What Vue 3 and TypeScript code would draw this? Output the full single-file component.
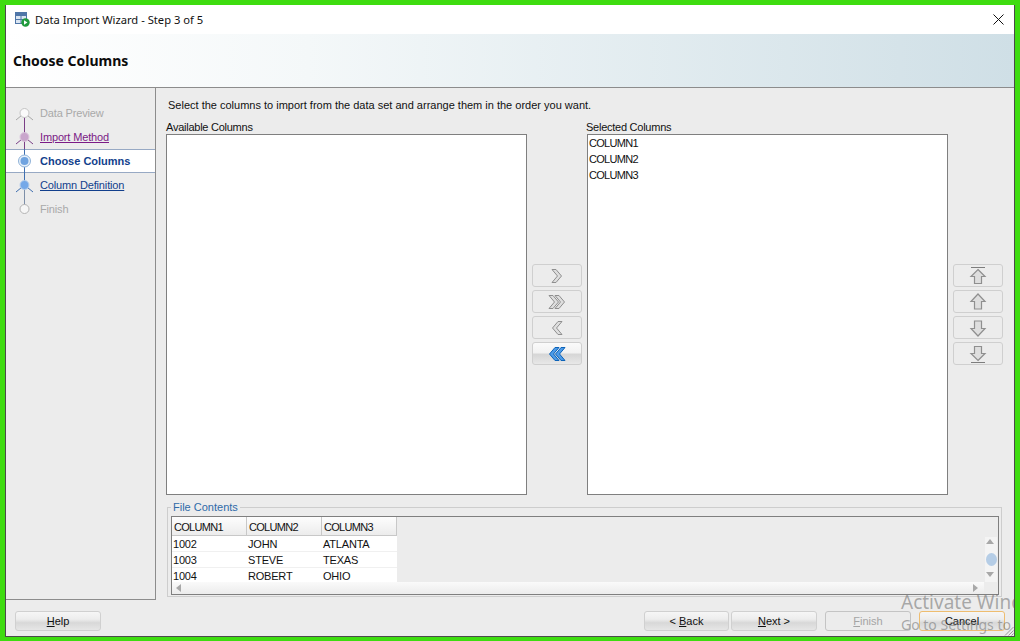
<template>
  <div class="frame">
    <div class="window">
      <div class="titlebar">
        <svg class="app-icon" width="15" height="15" viewBox="0 0 15 15">
          <rect x="0.5" y="0.5" width="11" height="11" fill="#dbe6f2" stroke="#4f76a8" />
          <rect x="1" y="1" width="10" height="3" fill="#4f76a8" />
          <path d="M1 7.5h10M6 4v7" stroke="#4f76a8" fill="none" />
          <circle cx="10.5" cy="10.5" r="4.2" fill="#1f9a3c" />
          <path d="M9 8.2l3.4 2.3L9 12.8z" fill="#fff" />
        </svg>
        <span class="title-text">Data Import Wizard - Step 3 of 5</span>
        <svg class="close-icon" width="11" height="11" viewBox="0 0 11 11">
          <path d="M0.5 0.5l10 10M10.5 0.5l-10 10" stroke="#111" stroke-width="1" fill="none" />
        </svg>
      </div>

      <div class="banner">
        <h1 class="banner-title">Choose Columns</h1>
      </div>

      <div class="body">
        <nav class="steps">
          <div
            v-for="step in steps"
            :key="step.label"
            class="step"
            :class="step.kind"
          >
            <svg class="step-node" width="24" height="24" viewBox="0 0 24 24">
              <path v-if="step.lineUp" d="M12.5 0V8" :stroke="step.lineUp" fill="none" />
              <path v-if="step.lineDown" d="M12.5 14V24" :stroke="step.lineDown" fill="none" />
              <path v-if="step.legs" d="M12.5 12L4 19M12.5 12L21 19" :stroke="step.legs" fill="none" />
              <template v-if="step.kind === 'current'">
                <circle cx="12.5" cy="12" r="6" fill="#e6f0fa" stroke="#8fb2d8" />
                <circle cx="12.5" cy="12" r="4" fill="#6fa3e0" />
              </template>
              <circle v-else cx="12.5" cy="12" r="4.5" :fill="step.fill" :stroke="step.ring" />
            </svg>
            <span class="step-label">{{ step.label }}</span>
          </div>
        </nav>

        <main class="content">
          <p class="intro">Select the columns to import from the data set and arrange them in the order you want.</p>

          <div class="pickers">
            <div class="pick-label">Available Columns</div>
            <div></div>
            <div class="pick-label selected-label">Selected Columns</div>
            <div></div>

            <div class="list-box"></div>
            <div class="tool-col">
              <button v-for="b in moveButtons" :key="b.id" class="tool-btn" :class="{ active: b.active }">
                <svg width="20" height="16" viewBox="0 0 20 16">
                  <path
                    v-for="(d, i) in b.paths"
                    :key="i"
                    :d="d"
                    :fill="b.active ? '#4d9be8' : '#dedede'"
                    :stroke="b.active ? '#0b62b8' : '#8f8f8f'"
                  />
                </svg>
              </button>
            </div>
            <div class="list-box">
              <div v-for="c in columns" :key="c" class="list-item">{{ c }}</div>
            </div>
            <div class="tool-col">
              <button v-for="b in orderButtons" :key="b.id" class="tool-btn">
                <svg width="18" height="20" viewBox="0 0 18 20">
                  <path v-if="b.bar" :d="b.bar" stroke="#7d7d7d" fill="none" />
                  <path :d="b.arrow" fill="#dedede" stroke="#8f8f8f" stroke-width="1.2" />
                </svg>
              </button>
            </div>
          </div>

          <section class="file-group">
            <span class="file-legend">File Contents</span>
            <div class="preview">
              <div class="preview-view">
                <div class="preview-row head">
                  <div v-for="c in columns" :key="c" class="cell">{{ c }}</div>
                </div>
                <div v-for="r in rows" :key="r[0]" class="preview-row">
                  <div v-for="v in r" :key="v" class="cell">{{ v }}</div>
                </div>
              </div>
              <div class="hbar">
                <span class="arrow-left"></span>
                <span class="arrow-right"></span>
              </div>
              <div class="vbar">
                <span class="arrow-up"></span>
                <span class="thumb"></span>
                <span class="arrow-down"></span>
              </div>
            </div>
          </section>
        </main>
      </div>

      <footer class="footer">
        <button class="btn help"><u>H</u>elp</button>
        <div class="spacer"></div>
        <button class="btn back">&lt; <u>B</u>ack</button>
        <button class="btn next"><u>N</u>ext &gt;</button>
        <button class="btn finish" disabled><u>F</u>inish</button>
        <button class="btn cancel">Cancel</button>
      </footer>

      <!-- windows watermark sits over the footer -->
      <div class="watermark">
        <div class="wm-big">Activate Windows</div>
        <div class="wm-small">Go to Settings to activate Windows.</div>
      </div>
      <svg class="grip" width="10" height="10" viewBox="0 0 10 10">
        <path d="M9.5 1L1 9.5M9.5 4.5L4.5 9.5M9.5 7.5L7.5 9.5" stroke="#9a9a9a" fill="none" />
      </svg>
    </div>
  </div>
</template>

<script setup lang="ts">
interface Step {
  label: string;
  kind: 'disabled' | 'visited' | 'current' | 'link';
  fill: string;
  ring: string;
  legs?: string;
  lineUp?: string;
  lineDown?: string;
}

const steps: Step[] = [
  { label: 'Data Preview', kind: 'disabled', fill: '#fafafa', ring: '#c4c4c4', legs: '#a8a8a8', lineDown: '#7a3f86' },
  { label: 'Import Method', kind: 'visited', fill: '#c9a6cc', ring: '#ddc9de', legs: '#7a3f86', lineUp: '#7a3f86', lineDown: '#7a3f86' },
  { label: 'Choose Columns', kind: 'current', fill: '#6fa3e0', ring: '#8fb2d8', lineUp: '#3f6fb0', lineDown: '#3f6fb0' },
  { label: 'Column Definition', kind: 'link', fill: '#74a8e8', ring: '#b8d0ec', legs: '#3f6fb0', lineUp: '#3f6fb0', lineDown: '#7d8fa8' },
  { label: 'Finish', kind: 'disabled', fill: '#f6f6f6', ring: '#b4b4b4', lineUp: '#7d8fa8' }
];

const columns = ['COLUMN1', 'COLUMN2', 'COLUMN3'];

const rows = [
  ['1002', 'JOHN', 'ATLANTA'],
  ['1003', 'STEVE', 'TEXAS'],
  ['1004', 'ROBERT', 'OHIO']
];

const chevronRight = (x: number) => `M${x} 1.5h4l5.5 6.5-5.5 6.5h-4l5.5-6.5z`;
const chevronLeft = (x: number) => `M${x} 1.5h-4l-5.5 6.5 5.5 6.5h4l-5.5-6.5z`;

const moveButtons = [
  { id: 'add', paths: [chevronRight(5)], active: false },
  { id: 'add-all', paths: [chevronRight(2), chevronRight(8)], active: false },
  { id: 'remove', paths: [chevronLeft(15)], active: false },
  { id: 'remove-all', paths: [chevronLeft(12), chevronLeft(18)], active: true }
];

const orderButtons = [
  { id: 'top', bar: 'M2 1.5H16', arrow: 'M9 3.5l7 7h-3.5v7h-7v-7H2z' },
  { id: 'up', bar: '', arrow: 'M9 2l7 7.5h-3.5V17h-7V9.5H2z' },
  { id: 'down', bar: '', arrow: 'M9 18l7-7.5h-3.5V3h-7v7.5H2z' },
  { id: 'bottom', bar: 'M2 18.5H16', arrow: 'M9 16.5l7-7h-3.5v-7h-7v7H2z' }
];
</script>

<style>
html,
body {
  margin: 0;
  background: #3edc10;
}
</style>

<style scoped>
.frame {
  box-sizing: border-box;
  width: 1020px;
  height: 641px;
  padding: 5px 5px 4px 5px;
  background: #3edc10;
  font-family: "Liberation Sans", Arial, sans-serif;
  font-size: 11px;
  color: #111;
  overflow: hidden;
}

.window {
  position: relative;
  box-sizing: border-box;
  height: 100%;
  display: flex;
  flex-direction: column;
  background: #ececec;
  border: 1px solid #4a4a4a;
  border-top: none;
  overflow: hidden;
}

.titlebar {
  flex: none;
  height: 29px;
  display: flex;
  align-items: center;
  padding: 0 10px 0 9px;
  background: #fff;
}

.app-icon {
  margin-right: 5px;
}

.title-text {
  font-family: "Noto Sans", sans-serif;
  font-size: 11.2px;
}

.close-icon {
  margin-left: auto;
}

.banner {
  flex: none;
  height: 53px;
  display: flex;
  align-items: center;
  padding-left: 7px;
  background: linear-gradient(90deg, #ffffff 0%, #f4f8f9 30%, #cfdfe6 100%);
  border-bottom: 1px solid #8c8c8c;
}

.banner-title {
  margin: 0;
  font-family: "Noto Sans", sans-serif;
  font-size: 14px;
  font-weight: 700;
  color: #0c0c0c;
}

.body {
  flex: 1;
  display: flex;
  min-height: 0;
}

.steps {
  box-sizing: border-box;
  flex: none;
  width: 150px;
  padding-top: 13px;
  border-right: 1px solid #8c8c8c;
  border-bottom: 1px solid #8c8c8c;
}

.step {
  box-sizing: border-box;
  height: 24px;
  display: flex;
  align-items: center;
  padding-left: 6px;
}

.step-node {
  flex: none;
  margin-right: 4px;
}

.step-label {
  letter-spacing: -0.15px;
}

.step.disabled .step-label {
  color: #a9a9a9;
}

.step.visited .step-label {
  color: #7b1a86;
  text-decoration: underline;
}

.step.link .step-label {
  color: #123f8c;
  text-decoration: underline;
}

.step.current {
  background: #fff;
  box-shadow: inset 0 1px 0 #97a9c4, inset 0 -1px 0 #97a9c4;
}

.step.current .step-label {
  color: #123f8c;
  font-weight: 700;
  letter-spacing: 0;
}

.content {
  flex: 1;
  min-width: 0;
  padding: 10px 0 0 10px;
}

.intro {
  margin: 0 0 8px 2px;
  line-height: 14px;
}

.pickers {
  display: grid;
  grid-template-columns: 361px 50px 361px 50px;
  grid-template-rows: 14px 361px;
  column-gap: 5px;
}

.pick-label {
  line-height: 14px;
  letter-spacing: -0.25px;
}

.selected-label {
  margin-left: -1px;
}

.list-box {
  box-sizing: border-box;
  background: #fff;
  border: 1px solid #7f7f7f;
}

.list-item {
  height: 16px;
  line-height: 16px;
  padding-left: 1px;
  letter-spacing: -0.7px;
}

.tool-col {
  align-self: center;
  display: flex;
  flex-direction: column;
  gap: 3px;
}

.tool-btn {
  box-sizing: border-box;
  height: 23px;
  padding: 0;
  display: flex;
  align-items: center;
  justify-content: center;
  background: #ececec;
  border: 1px solid #cfcfcf;
  border-radius: 3px;
}

.tool-btn.active {
  background: linear-gradient(180deg, #fafafa 0%, #f2f2f2 45%, #d6d6d6 55%, #e8e8e8 100%);
}

.file-group {
  position: relative;
  box-sizing: border-box;
  width: 835px;
  height: 90px;
  margin: 12px 0 0 1px;
  padding: 8px 2px 0 3px;
  border: 1px solid #cdcdcd;
}

.file-legend {
  position: absolute;
  top: -8px;
  left: 3px;
  padding: 0 2px;
  background: #ececec;
  color: #2f6aa8;
  line-height: 14px;
}

.preview {
  position: relative;
  box-sizing: border-box;
  height: 79px;
  display: flex;
  flex-direction: column;
  border: 1px solid #7f7f7f;
}

.preview-view {
  flex: 1;
  min-height: 0;
  overflow: hidden;
}

.preview-row {
  display: flex;
  height: 16px;
}

.preview-row.head {
  height: 19px;
}

.cell {
  box-sizing: border-box;
  width: 75px;
  padding-left: 1px;
  background: #fff;
  border-bottom: 1px solid #f0f0f0;
  line-height: 17px;
  letter-spacing: -0.2px;
}

.head .cell {
  padding-left: 2px;
  line-height: 20px;
  letter-spacing: -0.7px;
  background: linear-gradient(180deg, #fdfdfd 0%, #ececec 100%);
  border-right: 1px solid #c8c8c8;
  border-bottom: 1px solid #c8c8c8;
}

.hbar {
  position: relative;
  flex: none;
  height: 12px;
  margin-right: 14px;
  background: linear-gradient(180deg, #fafafa 0%, #ececec 100%);
}

.arrow-left,
.arrow-right {
  position: absolute;
  top: 2px;
  width: 0;
  height: 0;
  border-top: 4px solid transparent;
  border-bottom: 4px solid transparent;
}

.arrow-left {
  left: 4px;
  border-right: 5px solid #a8a8a8;
}

.arrow-right {
  right: 6px;
  border-left: 5px solid #a8a8a8;
}

.vbar {
  position: absolute;
  top: 20px;
  right: 1px;
  width: 12px;
  height: 45px;
  background: #f4f4f4;
}

.arrow-up,
.arrow-down {
  position: absolute;
  left: 1px;
  width: 0;
  height: 0;
  border-left: 4px solid transparent;
  border-right: 4px solid transparent;
}

.arrow-up {
  top: 2px;
  border-bottom: 5px solid #a8a8a8;
}

.arrow-down {
  bottom: 5px;
  border-top: 5px solid #a8a8a8;
}

.thumb {
  position: absolute;
  top: 16px;
  left: 1px;
  width: 11px;
  height: 13px;
  border-radius: 50%;
  background: #b5cde6;
}

.footer {
  flex: none;
  height: 36px;
  display: flex;
  align-items: flex-start;
  padding: 11px 9px 0 9px;
  box-sizing: border-box;
}

.spacer {
  flex: 1;
}

.btn {
  box-sizing: border-box;
  width: 86px;
  height: 20px;
  padding: 0;
  font: inherit;
  color: #111;
  background: linear-gradient(180deg, #f6f6f6 0%, #ededed 40%, #d8d8d8 60%, #e6e6e6 100%);
  border: 1px solid #d0d0d0;
  border-radius: 3px;
}

.back {
  width: 85px;
}

.next {
  margin-left: 2px;
}

.finish {
  margin-left: 8px;
  color: #a4a4a4;
  background: #ececec;
  border-color: #c4c4c4;
}

.cancel {
  margin-left: 8px;
  border-color: #eebd70;
}

.watermark {
  position: absolute;
  top: 585px;
  left: 895px;
  width: 300px;
  font-family: "Noto Sans", sans-serif;
  color: rgba(120, 120, 120, 0.6);
  pointer-events: none;
}

.wm-big {
  font-size: 19px;
  line-height: 24px;
}

.wm-small {
  font-size: 14px;
  line-height: 21px;
}

.grip {
  position: absolute;
  right: 0;
  bottom: 0;
}
</style>
